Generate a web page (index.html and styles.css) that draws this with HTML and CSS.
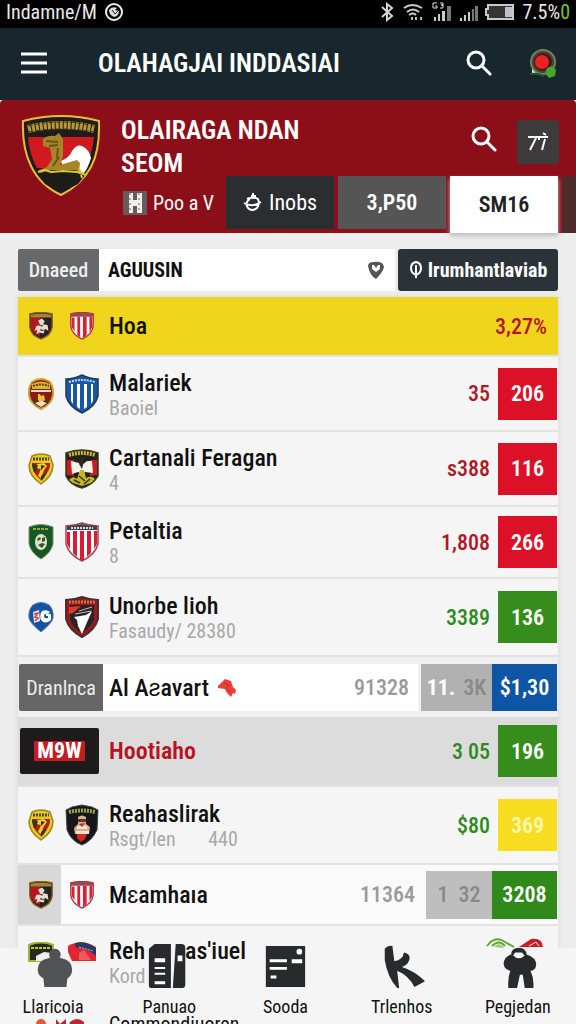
FILE: index.html
```html
<!DOCTYPE html>
<html lang="id">
<head>
<meta charset="utf-8">
<meta name="viewport" content="width=device-width, initial-scale=1">
<title>OLAHAGJAI INDDASIAI</title>
<link rel="stylesheet" href="styles.css">
</head>
<body>
<svg class="defs" aria-hidden="true">
  <symbol id="search" viewBox="0 0 26 26"><circle cx="10" cy="10" r="8" fill="none" stroke="#fff" stroke-width="3"/><path d="M16 16l8 8" stroke="#fff" stroke-width="3" stroke-linecap="round"/></symbol>
  <symbol id="s-dark" viewBox="0 0 26 30"><path d="M1 2q12-3 24 0v14q-1 9-12 13Q2 25 1 16z" fill="#242322" stroke="#8c6416" stroke-width="1.5"/><path d="M2 6h10v20Q3 22 2 16z" fill="#b3161d"/><path d="M2 3q11-2 22 0v3H2z" fill="#a8823a"/><path d="M10 9l4-2 3 3-2 3 5 1 1 6-4-2-1 5-5-1-3 2 1-5-3 1 2-5 4-1z" fill="#e6ddcf"/><path d="M11 14l4 1M12 19l4 1" stroke="#6d4a32" stroke-width="1.5"/></symbol>
  <symbol id="s-stripe" viewBox="0 0 26 30"><path d="M1 2q12-3 24 0v13q-1 9-12 14Q2 24 1 15z" fill="#fff" stroke="#b8303a" stroke-width="1.5"/><path d="M2 6h3v15l-3-5zM8 5h3v22l-3-2zM14 5h4v20l-4 3zM21 5h3v11l-3 6z" fill="#d52133"/><path d="M1 2q12-3 24 0v3H1z" fill="#9c4650"/></symbol>
  <symbol id="s-stripe-lg" viewBox="0 0 34 40"><path d="M1 4q8 0 16-3 8 3 16 3v18q-3 11-16 17Q4 33 1 22z" fill="#fff" stroke="#a34252" stroke-width="1.5"/><path d="M2 10h3v17l-3-5zM8 9h4v26l-4-4zM15 9h4v29h-4zM22 9h4v22l-4 4zM29 9h3v13l-3 5z" fill="#d91c34"/><path d="M2 4q8 0 15-2 7 2 15 2v4H2z" fill="#434252"/><path d="M6 6h22" stroke="#d8d5df" stroke-width="2" stroke-dasharray="2 1"/></symbol>
  <symbol id="s-blue" viewBox="0 0 34 40"><path d="M1 5q8 0 16-4 8 4 16 4v17q-3 11-16 17Q4 33 1 22z" fill="#1757a8" stroke="#23364f" stroke-width="1.5"/><path d="M6 10h2v20l-2-3zM12 10h3v25l-3-2zM19 10h3v23l-3 2zM26 10h2v17l-2 3z" fill="#fff"/><path d="M4 8q13-4 26 0" fill="none" stroke="#c5d4e6" stroke-width="2" stroke-dasharray="2 1"/></symbol>
  <symbol id="s-round" viewBox="0 0 26 32"><path d="M4 4q9-6 18 0 4 6 3 13-1 9-12 14Q2 26 1 17 0 10 4 4z" fill="#8c1a19" stroke="#d1a322" stroke-width="2"/><path d="M4 6q9-5 18 0v5H4z" fill="#dcb62e"/><path d="M5 8q8-3 16 0" fill="none" stroke="#574316" stroke-width="2" stroke-dasharray="2 1"/><path d="M3 12h20v2H3z" fill="#e5decb"/><path d="M10 16h2l1 2 3-1 1 5-4 3-3-3z" fill="#edc02e"/><path d="M7 25l6-2 6 2-6 4z" fill="#e9e5d2"/><path d="M4 22l5 1-2 3zM22 22l-5 1 2 3z" fill="#2c472d"/></symbol>
  <symbol id="s-yellow" viewBox="0 0 26 32"><path d="M4 3q9-4 18 0l3 9q0 11-12 19Q1 23 1 12z" fill="#e8ca25" stroke="#9c861c" stroke-width="1.5"/><path d="M4 10h18q1 8-9 17Q3 19 4 10z" fill="#b51e17"/><path d="M5 6h16" stroke="#4c4a1a" stroke-width="3" stroke-dasharray="2 1"/><path d="M9 11l7-1 3 3-3 4-3 8-3-2 3-7-5-1z" fill="#f0d22d"/><path d="M4 11l6 1-2 6-2 1zM13 23l6-4-3 6-3 3z" fill="#273a1b"/><path d="M13 12l4 1-4 4z" fill="#342619"/></symbol>
  <symbol id="s-wings" viewBox="0 0 34 40"><path d="M1 4q16-6 32 0v23q-5 9-16 12Q5 36 1 27z" fill="#22211b" stroke="#3c3b1a" stroke-width="1.5"/><path d="M2 11h7v16l-7-1zM25 11h7v15l-7 1z" fill="#c91d25"/><path d="M4 6q13-4 26 0" fill="none" stroke="#c8bd31" stroke-width="4" stroke-dasharray="2 1"/><path d="M6 12l8 2 3 2 5-4 5 0 1 12-8-1-3 2-4-2-6 2z" fill="#f5f2e8"/><path d="M15 11l2-3 2 4-2 8-3-5z" fill="#302b1d"/><path d="M4 31q4-5 8-1l3-9h4l2 8q6-3 9 1l-4 4-9 3-9-3z" fill="#c3b629"/><path d="M14 27l6 5M9 31l6 3M25 30l-6 5" stroke="#343218" stroke-width="1.5"/></symbol>
  <symbol id="s-green" viewBox="0 0 26 36"><path d="M1 3q12-5 24 0v17q-2 9-12 15Q3 29 1 20z" fill="#14582a" stroke="#79905d" stroke-width="1"/><path d="M5 5h16" stroke="#9ca63c" stroke-width="2" stroke-dasharray="3 1"/><ellipse cx="13" cy="18" rx="6" ry="8" fill="#e5dfbf"/><path d="M9 15l3-2 1 2-3 2zM14 14l3-1v4l-3 1zM10 21l4-2 3 1-3 4z" fill="#27583a"/></symbol>
  <symbol id="s-bluecircle" viewBox="0 0 26 32"><path d="M5 4q8-5 16 0 5 5 4 13-1 5-12 14Q2 22 1 17 0 9 5 4z" fill="#1453a4" stroke="#55759e"/><path d="M5 11l6-2 1 11-6 2z" fill="#e7e5e7"/><path d="M14 10q5-2 8 1l-2 2q-4-1-4 2t4 2v-2h-2v-2h5v6q-6 5-10 0-2-5 1-9z" fill="#fff"/><path d="M6 13l4-1-3 4 3 1-3 3" stroke="#d04742" stroke-width="1.5" fill="none"/></symbol>
  <symbol id="s-eagle" viewBox="0 0 34 42"><path d="M1 4q8 0 16-3 8 3 16 3v19q-3 11-16 18Q4 34 1 23z" fill="#9f171a" stroke="#433131" stroke-width="2"/><path d="M5 9h24v15q-3 7-12 13Q7 31 5 23z" fill="#292326"/><path d="M4 6h26" stroke="#c87343" stroke-width="3" stroke-dasharray="2 1"/><path d="M4 11l12-1-8 7-4 1z" fill="#e3382b"/><path d="M9 21l12-2 6-4-4 9-6 14-4-8-1-6z" fill="#fff"/><path d="M14 15l13-4M10 18l16-3" stroke="#c5c1c2" stroke-width="1"/></symbol>
  <symbol id="s-black" viewBox="0 0 34 42"><path d="M1 6l6-3 10-2 10 2 6 3-1 20q-5 11-15 15Q6 37 2 26z" fill="#171719" stroke="#4a4943"/><path d="M4 8q13-3 26 0" fill="none" stroke="#a2a056" stroke-width="4" stroke-dasharray="2 1"/><path d="M13 13q4-3 8 0v7l4 3-1 7H10l-1-6 4-4z" fill="#d7ae90"/><path d="M13 15h8v3h-8z" fill="#65351f"/><path d="M12 22h10v3H12zM11 27h13v3H11z" fill="#eee3d5"/><path d="M12 30h10l-2 5-4 3-4-4z" fill="#d9281d"/><path d="M14 20l6-1-3 4z" fill="#b23522"/></symbol>
</svg>
<div class="app">
  <header>
    <div class="status">
      <span>Indamne/M</span>
      <svg class="i20" viewBox="0 0 20 20"><circle cx="10" cy="10" r="8" fill="none" stroke="#eee" stroke-width="2"/><path d="M5 8q3-4 8-2l-2 2 4 1q0 5-5 6-5-2-5-7z" fill="#ddd"/><path d="M8 8l3 4 4-4" fill="none" stroke="#222"/></svg>
      <span class="grow"></span>
      <svg class="sys" viewBox="0 0 98 20" aria-hidden="true"><path d="M2 5l10 9-5 4V2l5 4L2 15" fill="none" stroke="#d6d6d6" stroke-width="2"/><g fill="none" stroke="#ccc" stroke-width="2"><path d="M24 6q8-6 18 0M27 10q6-5 12 0M29 13q4-3 7 0"/></g><path d="M31 15h2v3h-2zM35 15h2v3h-2zM40 15h2v3h-2z" fill="#bbb"/><path d="M57 1h-4v5h4V4h-2M60 1h3v2h-2 2v3h-3" fill="none" stroke="#ddd"/><g fill="#ccc"><path d="M54 15h2v4h-2zM58 12h2v7h-2zM62 9h3v10h-3z"/><path d="M80 16h2v3h-2zM84 13h2v6h-2zM88 10h2v9h-2z"/></g><g fill="#777"><path d="M67 4h4v15h-4zM92 7h2v12h-2zM95 4h3v15h-3z"/></g></svg>
      <svg class="battery" viewBox="0 0 30 16" aria-hidden="true"><path d="M3 1h25v14H3v-4H1V5h2z" fill="#343434" stroke="#c9c9c9" stroke-width="2"/><path d="M20 3h7v10h-7z" fill="#c0c0c8"/></svg>
      <span class="percent">7.5%<b>0</b></span>
    </div>
    <div class="appbar">
      <button class="plain" aria-label="Menu"><svg class="i26" viewBox="0 0 26 26"><path d="M0 4h26M0 13h26M0 22h26" stroke="#fff" stroke-width="3"/></svg></button>
      <h1>OLAHAGJAI INDDASIAI</h1>
      <button class="plain" aria-label="Cari"><svg class="i26"><use href="#search"/></svg></button>
      <button class="plain account" aria-label="Akun"><svg class="i30" viewBox="0 0 30 30"><path d="M4 18v8l5-2h12l5 4v-9z" fill="#f3f3e9"/><circle cx="15" cy="14" r="12" fill="#513f2b" stroke="#748064" stroke-width="2"/><circle cx="15" cy="14" r="9" fill="#33201c"/><circle cx="14" cy="14" r="7" fill="#ed2023"/><path d="M19 20l5-2 4 4-1 6-6 2-4-5z" fill="#46a72b"/><path d="M2 26q7-1 14 2" stroke="#195a29" stroke-width="2" fill="none"/></svg></button>
    </div>
    <div class="hero">
      <svg class="crest" viewBox="0 0 80 82" aria-hidden="true"><path d="M2 6Q40-4 78 6q1 29-8 46-10 18-30 28Q19 70 10 51 1 33 2 6z" fill="#1f1d1b" stroke="#e9bc36" stroke-width="2"/><path d="M7 22h66q-2 19-9 31H16Q8 39 7 22z" fill="#d1191f"/><path d="M40 46q9-4 11-10 5-7 10-5 7 3 9 12-3 10-7 15H44z" fill="#fff"/><path d="M7 14q33-8 66 0" fill="none" stroke="#b69a34" stroke-width="8" stroke-dasharray="3 1"/><path d="M7 11q33-8 66 0M7 17q33-6 66 0" fill="none" stroke="#423315" stroke-width="1" stroke-dasharray="5 2"/><path d="M22 24q5-4 12-3l4-3 4 6v17l-3 9 17-5 3 3-1 8-16 3H20l-2-4 8-3 5-8-2-11-7-2z" fill="#a58528"/><path d="M25 26l12 1M28 31l9-1M32 51l6-9M37 33l-1 10" fill="none" stroke="#6d5317" stroke-width="2"/><path d="M16 59l13-4h25l11 4-8 10-17 9-16-9z" fill="#1c1c19"/><path d="M17 57l7-2 6 2 12-1 14 1 9 3M58 53l3 10" fill="none" stroke="#dccb2a" stroke-width="2"/></svg>
      <h2>OLAIRAGA NDAN SEOM</h2>
      <button class="plain" aria-label="Cari klub"><svg class="i26"><use href="#search"/></svg></button>
      <button class="tool" aria-label="Olahraga"><svg class="i26" viewBox="0 0 26 26"><path d="M3 8h20M18 4l3 2M11 9L5 21M20 10l-3 11M14 8v3" fill="none" stroke="#fff" stroke-width="2"/></svg></button>
      <nav class="chips">
        <a class="chip first" href="#"><svg class="i24" viewBox="0 0 24 24"><path d="M0 0h24v24H0z" fill="#68595b"/><path d="M6 2h4v7h4V2h5v20h-5v-7h-4v7H6z" fill="#eee"/><path d="M7 2v20M16 2v20" stroke="#766" stroke-dasharray="2 3"/></svg>Poo a V</a>
        <a class="chip dark" href="#"><svg class="i20" viewBox="0 0 20 20"><path d="M4 6q6-3 11 0 2 5-1 9-5 4-9 0-4-5 2-9M1 10q8 5 17-1M10 0v6M8 3h5" fill="none" stroke="#fff" stroke-width="2"/></svg>Inobs</a>
        <a class="chip gray" href="#">3,P50</a>
        <a class="chip white" href="#" aria-current="page">SM16</a>
        <span class="more"></span>
      </nav>
    </div>
  </header>
  <main>
    <form class="filter">
      <label for="q">Dnaeed</label>
      <div class="field"><input id="q" type="text" value="AGUUSIN"><svg class="i20" viewBox="0 0 20 20"><path d="M2 6q0-4 6-4 9-1 10 5-1 5-8 12-6-3-8-13z" fill="#555"/><path d="M6 5h2l2 3 2-3h2v4l-4 3-4-3z" fill="#fff"/></svg></div>
      <button type="button"><svg class="i20 pin" viewBox="0 0 14 20"><path d="M7 2q5 1 5 6t-5 7q-5-2-5-7t5-6zM7 5v13" fill="none" stroke="#fff" stroke-width="2"/></svg>Irumhantlaviab</button>
    </form>
    <ul class="list">
      <li class="row yellow"><span class="logos"><svg class="sm"><use href="#s-dark"/></svg><svg class="sm"><use href="#s-stripe"/></svg></span><div class="team"><b>Hoa</b></div><span class="num red end">3,27%</span></li>
      <li class="row r75"><span class="logos"><svg class="md"><use href="#s-round"/></svg><svg class="lg"><use href="#s-blue"/></svg></span><div class="team"><b>Malariek</b><small>Baoiel</small></div><span class="num red">35</span><span class="badge b-red">206</span></li>
      <li class="row r75"><span class="logos"><svg class="md"><use href="#s-yellow"/></svg><svg class="lg"><use href="#s-wings"/></svg></span><div class="team"><b>Cartanali Feragan</b><small>4</small></div><span class="num red">s388</span><span class="badge b-red">116</span></li>
      <li class="row r72"><span class="logos"><svg class="tall"><use href="#s-green"/></svg><svg class="lg"><use href="#s-stripe-lg"/></svg></span><div class="team"><b>Petaltia</b><small>8</small></div><span class="num red">1,808</span><span class="badge b-red">266</span></li>
      <li class="row r78"><span class="logos"><svg class="md"><use href="#s-bluecircle"/></svg><svg class="lg"><use href="#s-eagle"/></svg></span><div class="team"><b>Unoɾbe lioh</b><small>Fasaudy/ 28380</small></div><span class="num green">3389</span><span class="badge b-green">136</span></li>
      <li class="strip"><span class="tag">Dranlnca</span><div class="body"><b>Al Aƨavart</b><svg class="i20" viewBox="0 0 20 20"><path d="M1 8l7-7 6 2 2 6 3 3-1 4-2-1-2 4-4-4-2-4-7-1z" fill="#e8413a"/><path d="M7 5l5 2-3 3 4 4" fill="none" stroke="#b92e2d"/></svg><span class="grow"></span><span class="muted">91328</span></div><span class="cell c1"><b>11.</b> 3K</span><span class="cell blue">$1,30</span></li>
      <li class="row shade"><span class="mow"><em>M9W</em></span><div class="team"><b class="crimson">Hootiaho</b></div><span class="num green">3 05</span><span class="badge b-green">196</span></li>
      <li class="row r78"><span class="logos"><svg class="md"><use href="#s-yellow"/></svg><svg class="lg"><use href="#s-black"/></svg></span><div class="team"><b>Reahaslirak</b><small>Rsgt/len <i>440</i></small></div><span class="num green">$80</span><span class="badge b-yellow">369</span></li>
      <li class="row wide"><span class="logos tinted"><svg class="sm"><use href="#s-dark"/></svg><svg class="sm"><use href="#s-stripe"/></svg></span><div class="team"><b>Mɛamhaıa</b></div><span class="muted">11364</span><span class="cell c2">1 &nbsp;32</span><span class="cell greencell">3208</span></li>
      <li class="row last"><span class="logos cut"><svg class="half" viewBox="0 0 26 20"><path d="M1 3q12-5 24 0v16H1z" fill="#232a20" stroke="#a7af2b" stroke-width="2"/><path d="M3 6h20" stroke="#c4cb2c" stroke-width="2" stroke-dasharray="3 1"/><path d="M8 14l8-4 8 1v8H8z" fill="#eee"/></svg><svg class="halflg" viewBox="0 0 30 20"><path d="M1 4Q15-4 29 5v14H5L1 10z" fill="#df2632"/><path d="M8 1q10-3 21 5v8q-8-8-21-9z" fill="#293a65"/><path d="M12 5l14 4" stroke="#bbb" stroke-dasharray="2 1"/><path d="M12 11l5-3 3 4 4 6h-12z" fill="#ee5a5f"/></svg></span><div class="team"><b>Reh</b><small>Kord</small></div><b class="tail">as'iuel</b><span class="grow"></span><svg class="ribbons" viewBox="0 0 60 12"><path d="M2 9q8-11 18-4l9 5M7 9q7-7 13 0" fill="none" stroke="#5da637" stroke-width="2"/><path d="M9 10q5-6 10 1z" fill="#8ed06a"/><path d="M34 10L46 2q11-2 12 8z" fill="#c91c23"/><path d="M44 9l7-4 3 4" stroke="#eee" fill="none"/></svg></li>
      <li class="peek"><svg class="dots" viewBox="0 0 60 12"><circle cx="13" cy="6" r="5" fill="#e35a38"/><path d="M28 1l4 5 6-5v10H28zM42 4q7-6 14 0v7H40z" fill="#bc2432"/></svg><b>Commondiuoren</b></li>
    </ul>
  </main>
  <nav class="tabs">
    <a href="#"><svg viewBox="0 0 48 48"><circle cx="26" cy="12" r="6"/><path d="M19 16q7-3 14 0 11 2 11 12 0 6-5 9l-1 9H15l-1-9q-6-3-6-9 0-10 11-12z"/></svg>Llaricoia</a>
    <a class="ink" href="#"><svg viewBox="0 0 48 48"><path d="M9 1h17v46H6q-3 0-3-3V6zM28 47l3-46h6q4 0 4 4v38q0 4-3 4z"/><path d="M9 16h11v4H9zM9 25h11v2H9zM9 31h11v2H9zM9 40h11v3H9zM33 13h5v6h-5z" fill="#fff"/></svg>Panuao</a>
    <a class="ink" href="#"><svg viewBox="0 0 48 48"><path d="M4 3h41v43H4z"/><path d="M8 17h18v3H8zM8 25h18v3H8zM9 34h6v3H9zM31 17h11v4H31z" fill="#fff"/><circle cx="39" cy="9" r="3" fill="#fff"/></svg>Sooda</a>
    <a class="ink" href="#"><svg viewBox="0 0 48 48"><path d="M6 6q3-4 8-3l2 16q9-1 10-9 6 1 6 6-1 7-8 9 13 4 24 15l-11 6q-6-12-18-17l2 18h-2Q9 36 6 18z"/></svg>Trlenhos</a>
    <a class="ink" href="#"><svg viewBox="0 0 48 48"><path fill-rule="evenodd" d="M17 12q0-7 8-7 7 0 8 7 10 3 10 11-1 6-6 6 4 8 3 18h-9l-2-14h-3l-3 14h-9q-1-10 2-18-6-1-7-7 0-8 8-10zM19 13q6 6 12 0l-3-3h-7z"/></svg>Pegjedan</a>
  </nav>
</div>
</body>
</html>
```
FILE: styles.css
```css
* { box-sizing: border-box; }
body { margin: 0; background: #ededed; color: #111; font-family: "Roboto Condensed", "Liberation Sans Narrow", Roboto, sans-serif; }
button, input { font: inherit; color: inherit; border: 0; padding: 0; margin: 0; background: none; }
a { color: inherit; text-decoration: none; }
h1, h2, ul { margin: 0; padding: 0; }
svg { display: block; flex: none; }
.defs { position: absolute; width: 0; height: 0; }
.app { position: relative; height: 100vh; overflow: hidden; }
.grow { flex: 1; }
.i20 { width: 20px; height: 20px; }
.i24 { width: 24px; height: 24px; }
.i26 { width: 26px; height: 26px; }
.i30 { width: 30px; height: 30px; }
.plain { display: block; }

.status { display: flex; align-items: center; gap: 7px; height: 28px; padding: 0 6px 4px; background: #000; color: #e8e8e8; font-size: 20px; }
.sys { width: 98px; height: 20px; }
.battery { width: 30px; height: 16px; }
.percent b { color: #7ac52c; font-weight: 400; }
.appbar { display: flex; align-items: center; height: 72px; padding: 0 18px 2px 21px; background: #18272e; color: #fff; }
.appbar h1 { flex: 1; padding-left: 51px; font-size: 26px; font-weight: 600; white-space: nowrap; }
.account { padding-left: 36px; }

.hero { display: grid; grid-template-columns: 80px 1fr auto auto; column-gap: 20px; align-items: start; height: 133px; padding-left: 21px; background: #8c0e19; color: #fff; border-radius: 4px 4px 0 0; }
.crest { width: 80px; height: 82px; margin-top: 15px; grid-row: 1 / 3; }
.hero h2 { height: 76px; padding-top: 14px; font-size: 26px; line-height: 33px; font-weight: 600; max-width: 200px; }
.hero .plain { margin-top: 26px; }
.tool { display: grid; place-items: center; width: 42px; height: 44px; margin: 20px 17px 0 0; background: #3d3b3b; border-radius: 3px; }
.chips { grid-column: 2 / 5; display: flex; align-items: flex-start; gap: 4px; height: 57px; font-size: 22px; }
.chip { flex: 0 0 108px; display: flex; align-items: center; justify-content: center; gap: 6px; height: 53px; }
.first { flex: 1; justify-content: flex-start; padding-left: 2px; font-size: 20px; white-space: nowrap; }
.dark { background: #2a2e30; }
.gray { background: #555; font-weight: 600; }
.white { height: 57px; background: #fff; color: #222; font-weight: 600; box-shadow: 0 3px 5px #bbb; }
.more { width: 14px; height: 57px; background: #4c2b2a; }

main { padding: 16px 18px 0; }
.filter { display: flex; height: 42px; margin-bottom: 6px; font-size: 20px; font-weight: 700; }
.filter label { display: grid; place-items: center; width: 81px; color: #eee; background: #66686a; font-weight: 500; border-radius: 2px 0 0 2px; }
.field { flex: 1; display: flex; align-items: center; padding: 0 9px; background: #fff; margin-right: 3px; min-width: 0; }
.field input { flex: 1; min-width: 0; }
.filter button { display: flex; align-items: center; justify-content: center; gap: 5px; width: 160px; background: #2b3338; color: #fff; border-radius: 3px; }
.pin { width: 14px; }

.list { list-style: none; box-shadow: 0 0 5px #d5d5d5; background: #f5f5f5; }
.row { display: flex; align-items: center; border-bottom: 2px solid #e2e2e2; padding-right: 1px; }
.yellow { height: 60px; background: #f1d51c; }
.r72 { height: 72px; }
.r75 { height: 75px; }
.r78 { height: 78px; }
.logos { flex: none; display: grid; grid-template-columns: 26px 34px; gap: 11px; align-items: center; justify-items: center; width: 91px; padding-left: 10px; }
.sm { width: 26px; height: 28px; }
.md { width: 26px; height: 34px; }
.tall { width: 26px; height: 36px; }
.lg { width: 34px; height: 42px; }
.team { flex: 1; white-space: nowrap; display: flex; flex-direction: column; }
.team b, .tail, .body b { font-size: 24px; line-height: 28px; font-weight: 500; }
.team small { font-size: 20px; line-height: 22px; color: #a8a8a8; }
.team i { font-style: normal; margin-left: 28px; }
.num, .badge, .muted, .cell { font-size: 22px; font-weight: 500; }
.num { padding-right: 8px; }
.end { padding-right: 10px; }
.red { color: #b31524; }
.green { color: #2f8a1c; }
.team .crimson { color: #b8131f; font-weight: 600; }
.badge { display: grid; place-items: center; width: 59px; height: 52px; color: #fff; font-weight: 600; }
.b-red { background: #dc1026; }
.b-green { background: #368d1c; }
.b-yellow { background: #f7dc20; color: #fdf8ae; }
.strip { display: flex; height: 60px; padding: 7px 1px 6px; background: #f0f0f0; }
.tag { display: grid; place-items: center; width: 84px; background: #656565; color: #eee; font-size: 20px; border-radius: 2px 0 0 2px; }
.body { flex: 1; display: flex; align-items: center; gap: 8px; padding: 0 9px 0 6px; margin-right: 3px; background: #fff; }
.muted { color: #999; }
.cell { display: flex; align-items: center; justify-content: center; gap: 8px; }
.c1 { width: 71px; background: #b1b1b1; color: #888; }
.c1 b { color: #fff; }
.blue { width: 65px; background: #0e55a5; color: #fff; font-weight: 600; }
.shade { height: 70px; background: #dcdcdd; }
.mow { display: grid; place-items: center; width: 79px; height: 46px; margin: 0 10px 0 2px; background: #1d1b1b; border-radius: 2px; color: #fff; font-size: 22px; }
.mow em { padding: 0 3px; line-height: 20px; background: #c51b25; font-style: normal; font-weight: 700; }
.wide { height: 61px; background: #fafafa; }
.tinted { align-self: stretch; background: linear-gradient(90deg, #d8d8d8 43px, #fafafa 43px); }
.c2 { width: 66px; height: 48px; margin-left: 11px; background: #bebebe; color: #888; }
.greencell { width: 65px; height: 48px; background: #2f8a1b; color: #fff; font-weight: 600; }
.last { height: 78px; align-items: flex-start; padding-top: 11px; border: 0; }
.last .team { flex: none; width: 76px; }
.last .team, .tail, .cut, .peek > * { position: relative; z-index: 2; }
.cut { align-items: start; padding-top: 5px; }
.half { width: 26px; height: 20px; }
.halflg { width: 30px; height: 20px; }
.ribbons { width: 60px; height: 12px; margin-right: 12px; }
.peek { display: flex; gap: 21px; padding: 8px 0 0 10px; font-size: 20px; line-height: 24px; }
.dots { width: 60px; height: 12px; margin-top: 6px; }
.peek b { font-weight: 400; }

.tabs { position: absolute; inset: auto 0 0 -5px; display: grid; grid-template-columns: repeat(5, 1fr); height: 84px; padding: 2px 0 6px; font-size: 18px; }
.tabs::before { content: ""; position: absolute; inset: 8px 0 0; z-index: 1; background: #f5f5f5; }
.tabs a { position: relative; z-index: 3; display: flex; flex-direction: column; align-items: center; gap: 5px; line-height: 24px; }
.tabs svg { width: 46px; height: 48px; fill: #505254; }
.tabs .ink svg { fill: #292a2b; }
```
